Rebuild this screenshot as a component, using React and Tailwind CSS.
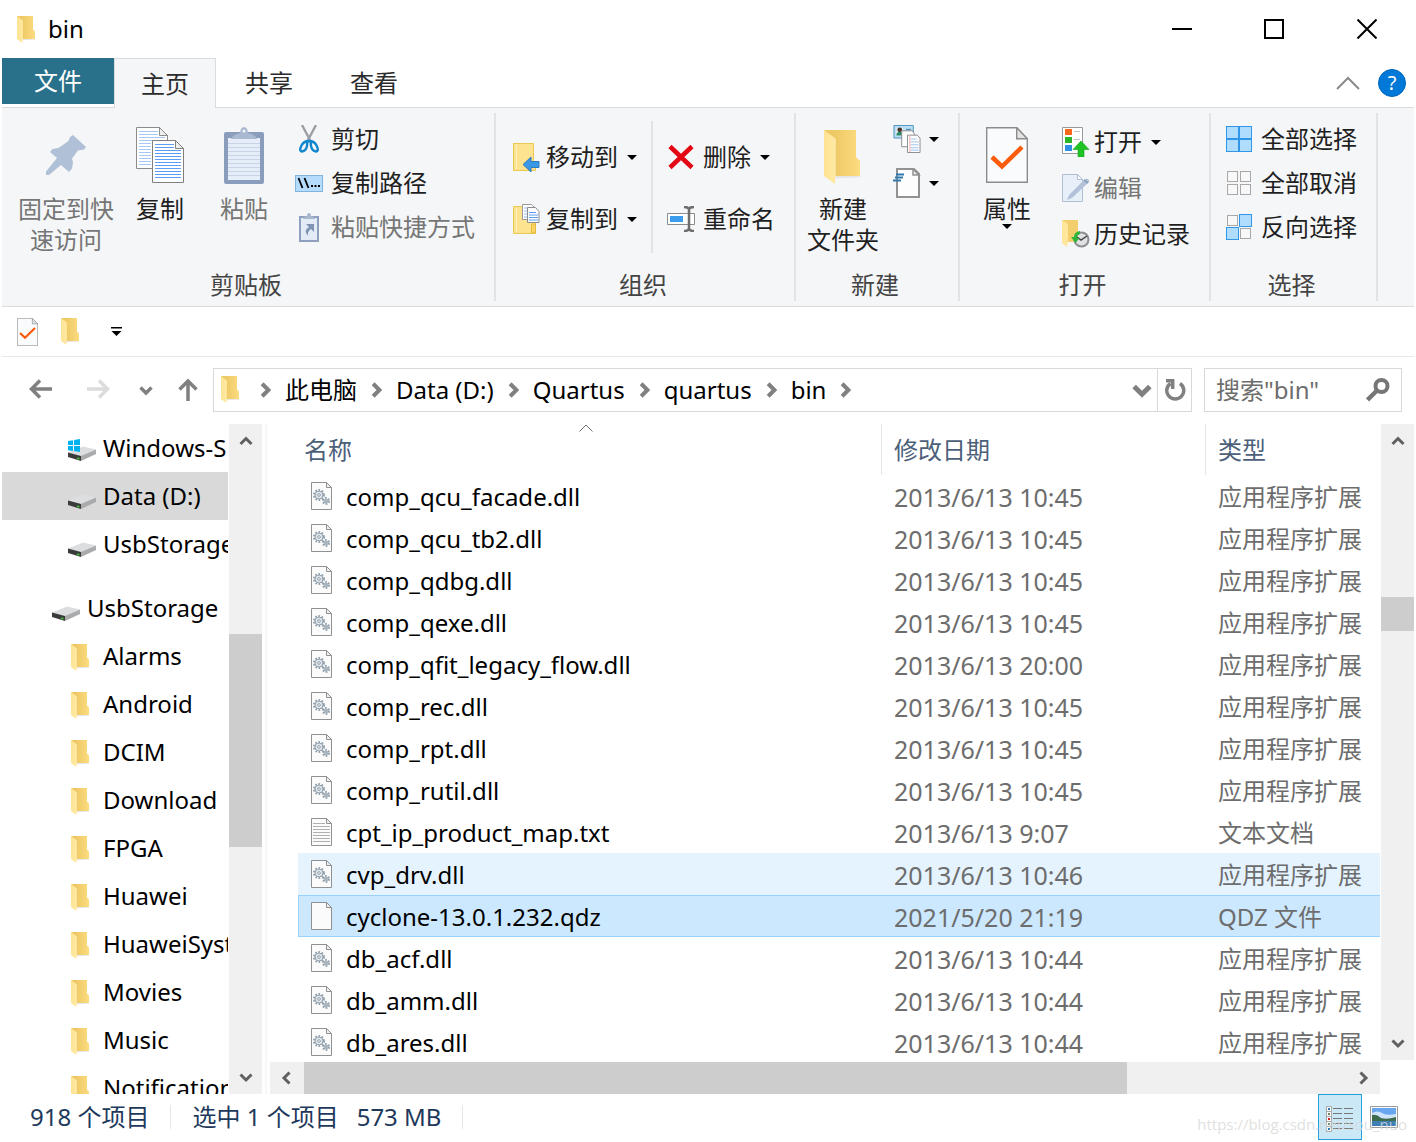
import { useState } from 'react';

const files = [
  { name: 'comp_qcu_facade.dll', date: '2013/6/13 10:45', type: '应用程序扩展', icon: 'dll' },
  { name: 'comp_qcu_tb2.dll', date: '2013/6/13 10:45', type: '应用程序扩展', icon: 'dll' },
  { name: 'comp_qdbg.dll', date: '2013/6/13 10:45', type: '应用程序扩展', icon: 'dll' },
  { name: 'comp_qexe.dll', date: '2013/6/13 10:45', type: '应用程序扩展', icon: 'dll' },
  { name: 'comp_qfit_legacy_flow.dll', date: '2013/6/13 20:00', type: '应用程序扩展', icon: 'dll' },
  { name: 'comp_rec.dll', date: '2013/6/13 10:45', type: '应用程序扩展', icon: 'dll' },
  { name: 'comp_rpt.dll', date: '2013/6/13 10:45', type: '应用程序扩展', icon: 'dll' },
  { name: 'comp_rutil.dll', date: '2013/6/13 10:45', type: '应用程序扩展', icon: 'dll' },
  { name: 'cpt_ip_product_map.txt', date: '2013/6/13 9:07', type: '文本文档', icon: 'txt' },
  { name: 'cvp_drv.dll', date: '2013/6/13 10:46', type: '应用程序扩展', icon: 'dll', hot: true },
  { name: 'cyclone-13.0.1.232.qdz', date: '2021/5/20 21:19', type: 'QDZ 文件', icon: 'blank' },
  { name: 'db_acf.dll', date: '2013/6/13 10:44', type: '应用程序扩展', icon: 'dll' },
  { name: 'db_amm.dll', date: '2013/6/13 10:44', type: '应用程序扩展', icon: 'dll' },
  { name: 'db_ares.dll', date: '2013/6/13 10:44', type: '应用程序扩展', icon: 'dll' },
];

const drives = [
  { name: 'Windows-S', windows: true },
  { name: 'Data (D:)', active: true },
  { name: 'UsbStorage' },
];

const folders = ['Alarms', 'Android', 'DCIM', 'Download', 'FPGA', 'Huawei', 'HuaweiSyst', 'Movies', 'Music', 'Notification'];

const crumbs = ['此电脑', 'Data (D:)', 'Quartus', 'quartus', 'bin'];

/* ---------- icons ---------- */

function FolderIcon({ className = 'w-[19px] h-[27px]' }) {
  return (
    <svg viewBox="0 0 19 27" className={`shrink-0 ${className}`} aria-hidden="true">
      <defs>
        <linearGradient id="folderBack" x1="0" x2="1">
          <stop offset="0.3" stopColor="#eec966" />
          <stop offset="1" stopColor="#fcdc80" />
        </linearGradient>
        <linearGradient id="folderFront" x1="0" x2="1">
          <stop offset="0" stopColor="#fde391" />
          <stop offset="1" stopColor="#ffe9a6" />
        </linearGradient>
      </defs>
      <path d="M5 23h14l-2 .8-11 .4z" fill="#e6e6e6" />
      <path d="M0 0h16v13.5l2 2V23H5L0 4z" fill="url(#folderBack)" />
      <path d="M0 0l5.9 4.4v17L5.4 27 0 23z" fill="url(#folderFront)" />
    </svg>
  );
}

function Chevron({ dir, size = 14, color = '#606060', width = 3 }) {
  const paths = {
    up: 'M1.5 10L7 4.5 12.5 10',
    down: 'M1.5 4.5L7 10l5.5-5.5',
    left: 'M9.5 1.5L4 7l5.5 5.5',
    right: 'M4.5 1.5L10 7l-5.5 5.5',
  };
  return (
    <svg width={size} height={size} viewBox="0 0 14 14" fill="none" stroke={color} strokeWidth={width} className="shrink-0" aria-hidden="true">
      <path d={paths[dir]} />
    </svg>
  );
}

function Caret() {
  return (
    <svg width="10" height="5" viewBox="0 0 10 5" className="shrink-0" aria-hidden="true">
      <path d="M0 0h10L5 5z" fill="#000" />
    </svg>
  );
}

function PinIcon() {
  return (
    <svg width="40" height="40" viewBox="0 0 40 40" aria-hidden="true">
      <path d="M27 0l13 12-2 2.500-6 1-6 8 1 4-1 6-3 3.500-8-7L3 40H0v-3.500L11 23l-7-6 2.500-3 6-1 10-7 1.500-4z" fill="#b0c0d6" />
    </svg>
  );
}

function CopyIcon() {
  return (
    <svg width="48" height="56" viewBox="0 0 48 56" aria-hidden="true">
      <path d="M.5.5h23l8 8v33H.5z" fill="#fff" stroke="#8c8c8c" />
      <path d="M3 4.500h19M3 7.500h19M3 10.500h26M3 13.500h26M3 16.500h12M3 19.500h12M3 22.500h12M3 25.500h12M3 28.500h12M3 31.500h12M3 34.500h12M3 37.500h12" stroke="#a5c8f7" />
      <path d="M23.500.5v8h8z" fill="#eee" stroke="#8c8c8c" />
      <path d="M16.500 13.500h23l8 8v34h-31z" fill="#fff" stroke="#808080" />
      <path d="M19 17.500h19M19 20.500h19M19 23.500h26M19 26.500h26M19 29.500h26M19 32.500h26M19 35.500h26M19 38.500h26M19 41.500h26M19 44.500h26M19 47.500h26M19 50.500h26" stroke="#5c9cf2" />
      <path d="M39.500 13.500v8h8z" fill="#eee" stroke="#808080" />
    </svg>
  );
}

function PasteIcon() {
  return (
    <svg width="40" height="57" viewBox="0 0 40 57" aria-hidden="true">
      <rect x="0" y="5" width="40" height="52" rx="2" fill="#8b9dbd" />
      <path d="M4 11h32v42H4z" fill="#e4edf8" />
      <path d="M4 16.500h32M4 20.500h32M4 24.500h32M4 28.500h32M4 32.500h32M4 36.500h32M4 40.500h32M4 44.500h32M4 48.500h32" stroke="#c9d5e6" />
      <path d="M7 12q1-4 9-6 .500-6 4-6t4 6q8 2 9 6z" fill="#a9b9d1" />
      <circle cx="20" cy="4" r="1.500" fill="#f4f6f8" />
    </svg>
  );
}

function ScissorsIcon() {
  return (
    <svg width="20" height="28" viewBox="0 0 20 28" fill="none" aria-hidden="true">
      <path d="M3 0l8 15M17 0L9 15" stroke="#9b9ea3" strokeWidth="2.400" />
      <path d="M9 15q-1 3-1 6-1 5-5 5.500-3-.5-1-5 2-5 7-5.500zM11 15q1 3 1 6 1 5 5 5.500 3-.5 1-5-2-5-7-5.500z" stroke="#1287cf" strokeWidth="2.400" />
    </svg>
  );
}

function CopyPathIcon() {
  return (
    <svg width="28" height="17" viewBox="0 0 28 17" aria-hidden="true">
      <rect x=".5" y=".5" width="27" height="16" fill="#b5dcfd" stroke="#80b4dd" />
      <path d="M3.500 3l4 10M9.500 3l4 10" stroke="#000" strokeWidth="1.800" />
      <path d="M16 10h2v2h-2zM19.500 10h2v2h-2zM23 10h2v2h-2z" fill="#000" />
    </svg>
  );
}

function PasteShortcutIcon() {
  return (
    <svg width="20" height="29" viewBox="0 0 20 29" aria-hidden="true">
      <path d="M1 4h18v24H1z" fill="#e3ebf6" stroke="#8fa0be" strokeWidth="2" />
      <path d="M4 6q1-3 4-3 0-3 2-3t2 3q3 0 4 3z" fill="#a9b7cd" />
      <path d="M7 11h8v8l-3-3q-4 3-3 7-5-6 1-9z" fill="#8193b3" />
    </svg>
  );
}

function MoveToIcon() {
  return (
    <svg width="28" height="29" viewBox="0 0 28 29" aria-hidden="true">
      <path d="M1.500.5h20v18h2v9h-22z" fill="#fde38f" stroke="#edc84e" />
      <path d="M4.500 2v24" stroke="#fff1bd" />
      <path d="M11 21.500l8-7.500v4.500h8v6h-8V29z" fill="#3c97e4" stroke="#2a7cc5" />
    </svg>
  );
}

function CopyToIcon() {
  return (
    <svg width="28" height="30" viewBox="0 0 28 30" aria-hidden="true">
      <path d="M1.500 2.500h20v16h2v11h-22z" fill="#fde38f" stroke="#edc84e" />
      <path d="M4.500 4v24" stroke="#fff1bd" />
      <path d="M19.500 20h4v9h-4z" fill="#f9d364" stroke="#e5bb3a" />
      <path d="M10.500.5h9l3 3v12h-12z" fill="#fff" stroke="#999" />
      <path d="M12 4h6M12 7h6M12 10h6M12 13h6" stroke="#8fbaf2" />
      <path d="M15.500 3.500h8l3.500 4v11H15.500z" fill="#fff" stroke="#8c8c8c" />
      <path d="M17 8.500h7M17 11h9M17 13.500h9M17 16h9" stroke="#5c9cf2" />
    </svg>
  );
}

function DeleteIcon() {
  return (
    <svg width="26" height="26" viewBox="0 0 26 26" aria-hidden="true">
      <path d="M2 2.500l22 21M24 2.500l-22 21" stroke="#e30613" strokeWidth="4.500" />
    </svg>
  );
}

function RenameIcon() {
  return (
    <svg width="28" height="26" viewBox="0 0 28 26" fill="none" aria-hidden="true">
      <path d="M.5 7.500h27v11H.5z" fill="#fff" stroke="#8c8c8c" />
      <path d="M3 10h13v6H3z" fill="#3b9bed" />
      <path d="M17 1q5 0 5 3 0-3 5-3M22 4v18M17 25q5 0 5-3 0 3 5 3" stroke="#6d6d6d" strokeWidth="2.500" />
    </svg>
  );
}

function NewItemIcon() {
  return (
    <svg width="28" height="28" viewBox="2 0 28 29" aria-hidden="true">
      <path d="M2.500.5h20v13h-20z" fill="#b9def5" stroke="#4d92bd" />
      <path d="M5 3h7v8H5z" fill="#e6f3ea" />
      <circle cx="8.500" cy="5" r="2.500" fill="#4a3427" />
      <path d="M5 11q0-4 3.500-4T12 11z" fill="#2d8a67" />
      <path d="M15 4.500h5" stroke="#3c7dab" />
      <path d="M10.500 6h11l2 3v13.500h-13z" fill="#fff" stroke="#8c8c8c" />
      <path d="M16.500 10.500h10l3 3v15h-13z" fill="#fff" stroke="#8c8c8c" />
      <path d="M20 14.500h6M20 17.500h8M20 20.500h8M20 23.500h8M20 26h8" stroke="#9dc3ef" />
      <path d="M19 11v17" stroke="#eda5a5" />
    </svg>
  );
}

function EasyAccessIcon() {
  return (
    <svg width="28" height="30" viewBox="0 0 28 30" aria-hidden="true">
      <path d="M4 1h17l5 5v23H4z" fill="#fdfdfd" stroke="#929292" strokeWidth="2" />
      <path d="M20 1v6h6z" fill="#eee" stroke="#929292" strokeWidth="1.500" />
      <path d="M3 6.500h8M2 9.500h8M0 12.500h8" stroke="#2f78ad" strokeWidth="1.800" />
    </svg>
  );
}

function PropertiesIcon({ className = 'w-[42px] h-[56px]' }) {
  return (
    <svg viewBox="0 0 42 56" className={`shrink-0 ${className}`} aria-hidden="true">
      <path d="M.7.7h30l10.600 11v43.600H.7z" fill="#fafbfc" stroke="#8c8c8c" strokeWidth="1.400" />
      <path d="M30.700.7v11h10.600z" fill="#e4e4e4" stroke="#8c8c8c" strokeWidth="1.400" />
      <path d="M6 30l10 9.500L36 20" fill="none" stroke="#fa5c0c" strokeWidth="4.500" />
    </svg>
  );
}

function OpenIcon() {
  return (
    <svg width="28" height="30" viewBox="0 0 28 30" aria-hidden="true">
      <path d="M.5.5h20v26H.5z" fill="#fff" stroke="#999" />
      <path d="M3 2h7v6H3z" fill="#f9691c" />
      <path d="M3 10h7v6H3z" fill="#2bb52b" />
      <path d="M3 18h7v6H3z" fill="#2f90e3" />
      <path d="M12 4.500h6M12 12.500h6" stroke="#c4c4c4" />
      <path d="M19 14l8 8.500h-5V30h-6v-7.500h-5z" fill="#1fc424" stroke="#17a01b" strokeWidth=".6" />
    </svg>
  );
}

function EditIcon() {
  return (
    <svg width="28" height="29" viewBox="0 0 28 29" aria-hidden="true">
      <path d="M.5.5h15l5 5v22H.5z" fill="#e7eff9" stroke="#b0bed4" />
      <path d="M15.500.5v5h5z" fill="#fff" stroke="#b0bed4" />
      <path d="M5 26l2-5L23 5q2-1 4 1v2L10 24z" fill="#b3c2d8" />
      <path d="M22 6l4 3" stroke="#8da2c3" strokeWidth="2" />
    </svg>
  );
}

function HistoryIcon() {
  return (
    <svg width="28" height="28" viewBox="0 0 28 28" aria-hidden="true">
      <path d="M0 0h16v22H5L0 4z" fill="#f2cf6c" />
      <path d="M0 0l6 4v17l-1 6-5-4z" fill="#ffe69b" />
      <circle cx="19.500" cy="19.500" r="7" fill="#dfe1e2" stroke="#8c9093" strokeWidth="2" />
      <path d="M15 17l4 3 6-4" stroke="#444" fill="none" strokeWidth="1.500" />
      <path d="M18 11q-6 1-6 6H9l4.500 6 4-5H15q0-3 3-4z" fill="#2fb63a" />
    </svg>
  );
}

function SelectIcon({ filled }) {
  const cells = [[0, 0], [13, 0], [0, 13], [13, 13]];
  return (
    <svg width="26" height="26" viewBox="0 0 26 26" aria-hidden="true">
      {cells.map(([x, y], i) =>
        filled.includes(i) ? (
          <rect key={i} x={x + 0.5} y={y + 0.5} width="12" height="12" fill="#b0dcfd" stroke="#2f96e8" />
        ) : (
          <rect key={i} x={x + 1.5} y={y + 1.5} width="10" height="10" fill="#f8f8f8" stroke="#a8a8a8" />
        )
      )}
    </svg>
  );
}

function Gear({ cx, cy, r }) {
  return (
    <g>
      <circle cx={cx} cy={cy} r={r + 1} fill="none" stroke="#93a1ad" strokeWidth="2" strokeDasharray="1.700 1.500" />
      <circle cx={cx} cy={cy} r={r} fill="#dfe5ea" stroke="#93a1ad" />
      <circle cx={cx} cy={cy} r={r / 3} fill="#fff" stroke="#93a1ad" />
    </g>
  );
}

function FileIcon({ kind }) {
  return (
    <svg width="21" height="28" viewBox="0 0 21 28" className="shrink-0" aria-hidden="true">
      <path d="M.5.5h15l5 5v22H.5z" fill="#fbfbfb" stroke="#919191" />
      <path d="M15.500.5v5h5z" fill="#eee" stroke="#919191" />
      {kind === 'dll' && (
        <>
          <Gear cx={8} cy={13} r={4} />
          <Gear cx={15} cy={19} r={2} />
        </>
      )}
      {kind === 'txt' && (
        <path d="M2 5.500h12M2 8.500h17M2 11.500h17M2 14.500h17M2 17.500h17M2 20.500h17M2 23.500h17" stroke="#b0b0b0" />
      )}
    </svg>
  );
}

function DriveIcon({ windows }) {
  return (
    <svg width="28" height="22" viewBox="0 0 28 22" className="mt-1 shrink-0" aria-hidden="true">
      <path d="M0 13.500L15 7.500l13 3-15 7z" fill="#dcdee0" />
      <path d="M13 17L28 10.500V15l-15 7z" fill="#a9abad" />
      <path d="M0 13.500L13 17v5L0 18z" fill="#3b3b3b" />
      <path d="M9 18.500l2.500.5v1.500L9 20z" fill="#35d335" />
      {windows && <path d="M0 2l5-.8V6H0zM6 1l6-1v6H6zM0 7h5v5l-5-.8zM6 7h6v6l-6-1z" fill="#00b3f0" />}
    </svg>
  );
}

function ArrowIcon({ dir, color }) {
  const paths = {
    left: 'M23 11H3M11 2.500L2.500 11l8.500 8.500',
    right: 'M0 11h20M12 2.500l8.500 8.500-8.500 8.500',
    up: 'M11 23V3M2.500 11.500L11 3l8.500 8.500',
  };
  return (
    <svg width="23" height="23" viewBox="0 0 23 23" fill="none" stroke={color} strokeWidth="3.500" aria-hidden="true">
      <path d={paths[dir]} />
    </svg>
  );
}

/* ---------- ribbon ---------- */

function BigButton({ icon, lines, disabled, caret, className }) {
  return (
    <button type="button" disabled={disabled} className={`flex flex-col items-center pt-3.5 ${className} ${disabled ? 'text-[#767676]' : 'text-[#1f1f1f]'}`}>
      <span className="mb-2.5 flex h-14 items-center justify-center">{icon}</span>
      {lines.map((line) => (
        <span key={line} className="whitespace-nowrap leading-[31px]">{line}</span>
      ))}
      {caret && <Caret />}
    </button>
  );
}

function SmallButton({ icon, label, title, disabled, caret, className = 'h-11 gap-2' }) {
  return (
    <button type="button" disabled={disabled} aria-label={title} className={`flex items-center ${className} ${disabled ? 'text-[#767676]' : 'text-[#1f1f1f]'}`}>
      <span className="flex w-7 shrink-0 items-center justify-center">{icon}</span>
      <span className="flex items-center gap-[9px] whitespace-nowrap">
        {label}
        {caret && <Caret />}
      </span>
    </button>
  );
}

function RibbonGroup({ label, className, padding = '', children }) {
  return (
    <section aria-label={label} className={`flex shrink-0 flex-col border-r-2 border-[#e2e3e4] ${className}`}>
      <div className={`flex h-[156px] ${padding}`}>{children}</div>
      <div className="pr-1 text-center leading-8 text-[#444]">{label}</div>
    </section>
  );
}

function Ribbon() {
  return (
    <div className="flex border-y border-[#dadbdc] bg-[#f5f6f8] pt-[5px] pb-[5px]">
      <RibbonGroup label="剪贴板" className="w-[494px]" padding="pl-4">
        <BigButton icon={<PinIcon />} lines={['固定到快', '速访问']} disabled className="w-24" />
        <BigButton icon={<CopyIcon />} lines={['复制']} className="w-[92px]" />
        <BigButton icon={<PasteIcon />} lines={['粘贴']} disabled className="w-[76px]" />
        <div className="flex flex-col pt-1 pl-[13px]">
          <SmallButton icon={<ScissorsIcon />} label="剪切" />
          <SmallButton icon={<CopyPathIcon />} label="复制路径" />
          <SmallButton icon={<PasteShortcutIcon />} label="粘贴快捷方式" disabled />
        </div>
      </RibbonGroup>
      <RibbonGroup label="组织" className="w-[300px]" padding="pl-4">
        <div className="flex flex-col pt-[13px] pr-3.5">
          <SmallButton icon={<MoveToIcon />} label="移动到" caret className="h-[62px] gap-1.5" />
          <SmallButton icon={<CopyToIcon />} label="复制到" caret className="h-[62px] gap-1.5" />
        </div>
        <div className="mt-2 mb-4 border-r-2 border-[#e2e3e4]" />
        <div className="flex flex-col pt-[13px] pl-3.5">
          <SmallButton icon={<DeleteIcon />} label="删除" caret className="h-[62px] gap-2" />
          <SmallButton icon={<RenameIcon />} label="重命名" className="h-[62px] gap-2" />
        </div>
      </RibbonGroup>
      <RibbonGroup label="新建" className="w-[164px]">
        <BigButton icon={<FolderIcon className="mt-1 h-[54px] w-[38px]" />} lines={['新建', '文件夹']} className="w-[94px]" />
        <div className="flex flex-col pt-1 pl-[3px]">
          <SmallButton icon={<NewItemIcon />} title="新建项目" caret />
          <SmallButton icon={<EasyAccessIcon />} title="轻松访问" caret />
        </div>
      </RibbonGroup>
      <RibbonGroup label="打开" className="w-[251px]">
        <BigButton icon={<PropertiesIcon />} lines={['属性']} caret className="w-[94px]" />
        <div className="flex flex-col pt-1.5 pl-2">
          <SmallButton icon={<OpenIcon />} label="打开" caret className="h-[46px] gap-1" />
          <SmallButton icon={<EditIcon />} label="编辑" disabled className="h-[46px] gap-1" />
          <SmallButton icon={<HistoryIcon />} label="历史记录" className="h-[46px] gap-1" />
        </div>
      </RibbonGroup>
      <RibbonGroup label="选择" className="w-[167px]" padding="pl-3.5">
        <div className="flex flex-col pt-1">
          <SmallButton icon={<SelectIcon filled={[0, 1, 2, 3]} />} label="全部选择" />
          <SmallButton icon={<SelectIcon filled={[]} />} label="全部取消" />
          <SmallButton icon={<SelectIcon filled={[1, 2]} />} label="反向选择" />
        </div>
      </RibbonGroup>
    </div>
  );
}

/* ---------- window parts ---------- */

function TitleBar() {
  return (
    <header className="flex h-[58px] items-center">
      <div className="flex flex-1 items-center gap-3 pl-[15px]">
        <FolderIcon />
        <h1>bin</h1>
      </div>
      <button type="button" aria-label="最小化" className="flex h-full w-[92px] items-center justify-center">
        <svg width="20" height="20" viewBox="0 0 20 20"><path d="M0 10h20" stroke="#000" strokeWidth="2" /></svg>
      </button>
      <button type="button" aria-label="最大化" className="flex h-full w-[92px] items-center justify-center">
        <svg width="20" height="20" viewBox="0 0 20 20"><path d="M1 1h18v18H1z" fill="none" stroke="#000" strokeWidth="2" /></svg>
      </button>
      <button type="button" aria-label="关闭" className="flex h-full w-[94px] items-center justify-center">
        <svg width="20" height="20" viewBox="0 0 20 20"><path d="M.5.5l19 19M19.500.5l-19 19" stroke="#000" strokeWidth="2" /></svg>
      </button>
    </header>
  );
}

function Tabs() {
  return (
    <nav className="flex h-[49px] text-[#2b2b2b]">
      <button type="button" className="h-[46px] w-28 bg-[#29718a] text-white">文件</button>
      <button type="button" className="relative -mb-px h-[50px] w-[102px] border border-b-0 border-[#dadbdc] bg-[#f5f6f8]">主页</button>
      <button type="button" className="w-[106px]">共享</button>
      <button type="button" className="w-[104px]">查看</button>
      <div className="ml-auto flex items-center gap-[18px] pr-2">
        <button type="button" aria-label="最小化功能区">
          <svg width="24" height="14" viewBox="0 0 24 14"><path d="M1 13L12 2l11 11" fill="none" stroke="#8a8a8a" strokeWidth="2" /></svg>
        </button>
        <button type="button" aria-label="帮助" className="size-7 rounded-full border border-[#0067b8] bg-[#0078d7] text-xl leading-6 text-white">?</button>
      </div>
    </nav>
  );
}

function QuickAccess() {
  return (
    <div className="flex h-[50px] items-center border-b border-[#e8e8e8] pl-[15px]">
      <button type="button" aria-label="属性"><PropertiesIcon className="h-7 w-[21px]" /></button>
      <button type="button" aria-label="新建文件夹" className="ml-[23px]"><FolderIcon /></button>
      <button type="button" aria-label="自定义快速访问工具栏" className="ml-[31px]">
        <svg width="11" height="9" viewBox="0 0 11 9"><path d="M0 0h11v1.500H0zM.5 4h10l-5 5z" fill="#000" /></svg>
      </button>
    </div>
  );
}

function AddressBar() {
  return (
    <div className="flex h-[67px] items-center pr-3 pb-0.5">
      <button type="button" aria-label="后退" className="ml-[27px]"><ArrowIcon dir="left" color="#808080" /></button>
      <button type="button" aria-label="前进" className="ml-[35px]"><ArrowIcon dir="right" color="#dcdcdc" /></button>
      <button type="button" aria-label="最近浏览的位置" className="ml-[29px]"><Chevron dir="down" color="#808080" width={3.5} /></button>
      <button type="button" aria-label="上移" className="ml-6"><ArrowIcon dir="up" color="#808080" /></button>
      <div className="ml-[13px] flex h-11 min-w-0 flex-1 items-center border border-[#d9d9d9] pl-[7px]">
        <FolderIcon />
        <span className="ml-[17px] flex"><Chevron dir="right" color="#808080" size={16} width={3.5} /></span>
        {crumbs.map((crumb) => (
          <div key={crumb} className="flex items-center">
            <a href="#" className="mr-[11px] ml-3 whitespace-nowrap">{crumb}</a>
            <Chevron dir="right" color="#808080" size={16} width={3.5} />
          </div>
        ))}
        <button type="button" aria-label="以前的位置" className="mr-[5px] ml-auto"><Chevron dir="down" color="#808080" size={20} width={3.5} /></button>
        <button type="button" aria-label="刷新" className="flex h-full w-[34px] items-center justify-center border-l border-[#d9d9d9]">
          <svg width="22" height="24" viewBox="0 0 22 24" fill="none" stroke="#808080" strokeWidth="3.500" aria-hidden="true">
            <path d="M6.500 5.500a8.500 8.500 0 1 0 9.500 0" />
            <path d="M2 2.800h6.700V11" />
          </svg>
        </button>
      </div>
      <label className="ml-3 flex h-11 w-[198px] items-center border border-[#d9d9d9] px-[11px]">
        <input type="search" aria-label="搜索" placeholder={'搜索"bin"'} className="w-0 flex-1 bg-transparent placeholder:text-[#6d6d6d] focus:outline-none" />
        <svg width="24" height="24" viewBox="0 0 24 24" fill="none" stroke="#767676" aria-hidden="true">
          <circle cx="15.500" cy="8" r="6" strokeWidth="4" />
          <path d="M11 12.500L1.500 22" strokeWidth="4.500" />
        </svg>
      </label>
    </div>
  );
}

function Scrollbar({ horizontal, before, thumb, after }) {
  return (
    <div className={`flex shrink-0 bg-[#f0f0f0] ${horizontal ? 'h-8' : 'w-[33px] flex-col'}`}>
      <button type="button" aria-label={horizontal ? '向左滚动' : '向上滚动'} className={`flex items-center justify-center ${horizontal ? 'w-[34px]' : 'h-[34px]'}`}>
        <Chevron dir={horizontal ? 'left' : 'up'} />
      </button>
      <div style={{ flex: `${before} 0 0px` }} />
      <div className="bg-[#cdcdcd]" style={{ flex: `${thumb} 0 0px` }} />
      <div style={{ flex: `${after} 0 0px` }} />
      <button type="button" aria-label={horizontal ? '向右滚动' : '向下滚动'} className={`flex items-center justify-center ${horizontal ? 'w-[34px]' : 'h-[34px]'}`}>
        <Chevron dir={horizontal ? 'right' : 'down'} />
      </button>
    </div>
  );
}

function TreeItem({ icon, label, active, className }) {
  return (
    <li>
      <a href="#" className={`flex h-12 items-center whitespace-nowrap text-black ${className} ${active ? 'bg-[#d9d9d9]' : ''}`}>
        {icon}
        {label}
      </a>
    </li>
  );
}

function Sidebar() {
  return (
    <aside className="flex w-[260px] shrink-0">
      <ul className="w-[226px] overflow-hidden">
        {drives.map((drive) => (
          <TreeItem key={drive.name} icon={<DriveIcon windows={drive.windows} />} label={drive.name} active={drive.active} className="gap-[7px] pl-[66px]" />
        ))}
        <li className="h-4" />
        <TreeItem icon={<DriveIcon />} label="UsbStorage" className="gap-[7px] pl-[50px]" />
        {folders.map((folder) => (
          <TreeItem key={folder} icon={<FolderIcon className="mt-0.5 h-[27px] w-[19px]" />} label={folder} className="gap-[13px] pl-[69px]" />
        ))}
      </ul>
      <div className="ml-px flex">
        <Scrollbar before={176} thumb={213} after={213} />
      </div>
    </aside>
  );
}

function FileTable() {
  const [selected, setSelected] = useState('cyclone-13.0.1.232.qdz');

  return (
    <div className="relative min-h-0 flex-1 overflow-hidden pl-7">
      <table className="w-[calc(100%+2px)] table-fixed border-separate border-spacing-0 text-left">
        <colgroup>
          <col />
          <col className="w-[324px]" />
          <col className="w-44" />
        </colgroup>
        <thead className="text-[#4c607a]">
          <tr className="h-[51px]">
            <th aria-sort="ascending" className="relative border-r border-[#e5e5e5] p-0 pl-1.5 font-normal">
              名称
              <svg width="14" height="8" viewBox="0 0 14 8" className="absolute top-0 left-[281px]" aria-hidden="true">
                <path d="M.5 7.500L7 1l6.500 6.500" fill="none" stroke="#6d6d6d" />
              </svg>
            </th>
            <th className="border-r border-[#e5e5e5] p-0 pl-3 font-normal">修改日期</th>
            <th className="p-0 pl-3 font-normal">类型</th>
          </tr>
        </thead>
        <tbody className="text-[#6d6d6d]">
          {files.map((file) => (
            <tr
              key={file.name}
              onClick={() => setSelected(file.name)}
              className={`h-[42px] whitespace-nowrap ${
                file.name === selected
                  ? 'bg-[#cce8ff] outline outline-1 -outline-offset-1 outline-[#99d1ff]'
                  : file.hot
                    ? 'bg-[#e5f3ff]'
                    : ''
              }`}
            >
              <td className="p-0 pl-[13px]">
                <div className="flex items-center gap-3.5 text-black">
                  <FileIcon kind={file.icon} />
                  <span className="pt-0.5">{file.name}</span>
                </div>
              </td>
              <td className="p-0 pt-0.5 pl-3 text-[25px] leading-9">{file.date}</td>
              <td className="p-0 pt-0.5 pl-3 leading-9">{file.type}</td>
            </tr>
          ))}
        </tbody>
      </table>
    </div>
  );
}

function StatusBar() {
  return (
    <footer className="relative flex h-12 shrink-0 items-center pr-4 pb-0.5 pl-7 text-[#1e395b]">
      <span>918 个项目</span>
      <span className="mx-[21px] h-6 w-px bg-[#e8e8e8]" />
      <span>选中 1 个项目</span>
      <span className="ml-[18px]">573 MB</span>
      <span className="mx-[21px] h-6 w-px bg-[#e8e8e8]" />
      <button type="button" aria-label="详细信息" className="ml-auto flex h-[46px] w-11 items-center justify-center border border-[#26a0da] bg-[#cbe8f6]">
        <svg width="28" height="26" viewBox="0 0 28 26" className="mt-1" aria-hidden="true">
          <path d="M.5.5h5v25h-5zM.5 5.500h5M.5 10.500h5M.5 15.500h5M.5 20.500h5" fill="#fff" stroke="#a8a8a8" />
          <path d="M2 2h2v2H2zM2 22h2v2H2z" fill="#2e75b6" />
          <path d="M2 7h2v2H2zM2 17h2v2H2z" fill="#6b8a5a" />
          <path d="M2 12h2v2H2z" fill="#d42020" />
          <path d="M7 2.500h9M18 2.500h9M7 7.500h9M18 7.500h9M7 12.500h9M18 12.500h9M7 17.500h9M18 17.500h9M7 22.500h9M18 22.500h9" stroke="#777" />
        </svg>
      </button>
      <button type="button" aria-label="大图标" className="ml-2">
        <svg width="28" height="22" viewBox="0 0 28 22" aria-hidden="true">
          <path d="M.5.5h27v21H.5z" fill="#fff" stroke="#9a9a9a" />
          <path d="M2 2h24v18H2z" fill="#68a6ef" />
          <path d="M2 7q6-3 10 0t14 1v5H2z" fill="#cfe4fb" />
          <path d="M2 9q5-1 9 3 6 2 15-1v4H2z" fill="#3f6b4d" />
          <path d="M2 15h24v5H2z" fill="#3f7fb4" />
        </svg>
      </button>
      <span className="pointer-events-none absolute right-[7px] bottom-2 font-['Open_Sans','Noto_Sans',sans-serif] text-[15px] leading-5 text-[#d8d8d8]/80">https://blog.csdn.net/sou_nuo</span>
    </footer>
  );
}

export default function App() {
  return (
    <div className="flex h-screen flex-col overflow-hidden bg-white px-0.5 font-['Noto_Sans','Noto_Sans_CJK_SC',sans-serif] text-2xl text-black">
      <TitleBar />
      <Tabs />
      <Ribbon />
      <QuickAccess />
      <AddressBar />
      <main className="flex min-h-0 flex-1">
        <Sidebar />
        <div className="ml-[3px] w-0.5 shrink-0 bg-[#f7f7f7]" />
        <div className="ml-[3px] flex min-w-0 flex-1">
          <div className="flex min-w-0 flex-1 flex-col">
            <FileTable />
            <Scrollbar horizontal before={0} thumb={823} after={219} />
          </div>
          <div className="mb-[34px] ml-px flex">
            <Scrollbar before={139} thumb={34} after={395} />
          </div>
        </div>
      </main>
      <StatusBar />
    </div>
  );
}
